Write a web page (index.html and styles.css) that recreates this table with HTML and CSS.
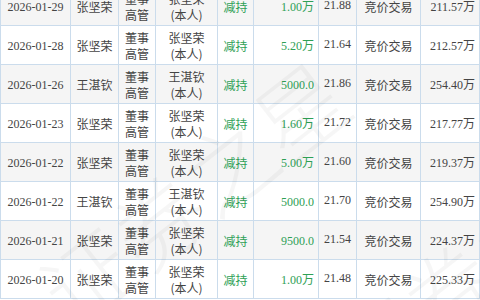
FILE: index.html
```html
<!DOCTYPE html>
<html lang="zh">
<head>
<meta charset="utf-8">
<link rel="stylesheet" href="styles.css">
</head>
<body>
<div class="wrap">
<div class="trades">
<div class="row odd"><div class="cell d">2026-01-29</div><div class="cell">张坚荣</div><div class="cell">董事<br>高管</div><div class="cell">张坚荣<br>(本人)</div><div class="cell g">减持</div><div class="cell g r d">1.00万</div><div class="cell d n">21.88</div><div class="cell">竞价交易</div><div class="cell r d">211.57万</div></div>
<div class="row"><div class="cell d">2026-01-28</div><div class="cell">张坚荣</div><div class="cell">董事<br>高管</div><div class="cell">张坚荣<br>(本人)</div><div class="cell g">减持</div><div class="cell g r d">5.20万</div><div class="cell d n">21.64</div><div class="cell">竞价交易</div><div class="cell r d">212.57万</div></div>
<div class="row odd"><div class="cell d">2026-01-26</div><div class="cell">王湛钦</div><div class="cell">董事<br>高管</div><div class="cell">王湛钦<br>(本人)</div><div class="cell g">减持</div><div class="cell g r d">5000.0</div><div class="cell d n">21.86</div><div class="cell">竞价交易</div><div class="cell r d">254.40万</div></div>
<div class="row"><div class="cell d">2026-01-23</div><div class="cell">张坚荣</div><div class="cell">董事<br>高管</div><div class="cell">张坚荣<br>(本人)</div><div class="cell g">减持</div><div class="cell g r d">1.60万</div><div class="cell d n">21.72</div><div class="cell">竞价交易</div><div class="cell r d">217.77万</div></div>
<div class="row odd"><div class="cell d">2026-01-22</div><div class="cell">张坚荣</div><div class="cell">董事<br>高管</div><div class="cell">张坚荣<br>(本人)</div><div class="cell g">减持</div><div class="cell g r d">5.00万</div><div class="cell d n">21.60</div><div class="cell">竞价交易</div><div class="cell r d">219.37万</div></div>
<div class="row"><div class="cell d">2026-01-22</div><div class="cell">王湛钦</div><div class="cell">董事<br>高管</div><div class="cell">王湛钦<br>(本人)</div><div class="cell g">减持</div><div class="cell g r d">5000.0</div><div class="cell d n">21.70</div><div class="cell">竞价交易</div><div class="cell r d">254.90万</div></div>
<div class="row odd"><div class="cell d">2026-01-21</div><div class="cell">张坚荣</div><div class="cell">董事<br>高管</div><div class="cell">张坚荣<br>(本人)</div><div class="cell g">减持</div><div class="cell g r d">9500.0</div><div class="cell d n">21.54</div><div class="cell">竞价交易</div><div class="cell r d">224.37万</div></div>
<div class="row"><div class="cell d">2026-01-20</div><div class="cell">张坚荣</div><div class="cell">董事<br>高管</div><div class="cell">张坚荣<br>(本人)</div><div class="cell g">减持</div><div class="cell g r d">1.00万</div><div class="cell d n">21.48</div><div class="cell">竞价交易</div><div class="cell r d">225.33万</div></div>
</div>
<div class="wm wm1">证券之星</div>
<div class="wm wm2">证券之星</div>
</div>
</body>
</html>
```

FILE: styles.css
```css
html, body {
  margin: 0;
  padding: 0;
  background: #fff;
  overflow: hidden;
}
.wrap {
  position: relative;
  width: 480px;
  height: 300px;
  overflow: hidden;
}
.trades {
  width: 480px;
  box-sizing: border-box;
  margin-top: -13px;
  border-left: 1px solid #cbdcec;
  font-family: "Noto Sans CJK SC", sans-serif;
  font-size: 12px;
  color: #444;
}
.row {
  display: grid;
  grid-template-columns: 70px 48px 37px 62px 36px 65px 38px 64px 59px;
  height: 39px;
}
.row.odd { background: #f5f5f5; }
.cell {
  box-sizing: border-box;
  border-right: 1px solid #cbdcec;
  border-bottom: 1px solid #cbdcec;
  display: flex;
  flex-direction: column;
  align-items: center;
  justify-content: center;
  text-align: center;
  line-height: 16px;
  white-space: nowrap;
  overflow: hidden;
  padding-top: 1px;
}
.cell.d { font-family: "Liberation Serif", "Noto Sans CJK SC", serif; }
.cell.g { color: #2ea055; }
.cell.r { align-items: flex-end; padding-right: 4px; }
.cell.n { padding-top: 0; padding-bottom: 2px; }
.wm {
  position: absolute;
  font-family: "Noto Sans CJK SC", sans-serif;
  font-size: 90px;
  font-weight: 300;
  color: rgba(0, 0, 0, 0.035);
  white-space: nowrap;
  pointer-events: none;
  transform-origin: left top;
}
.wm1 { left: 10px; top: 250px; transform: rotate(-38deg); }
.wm2 { left: 300px; top: 320px; transform: rotate(-38deg); }
```
